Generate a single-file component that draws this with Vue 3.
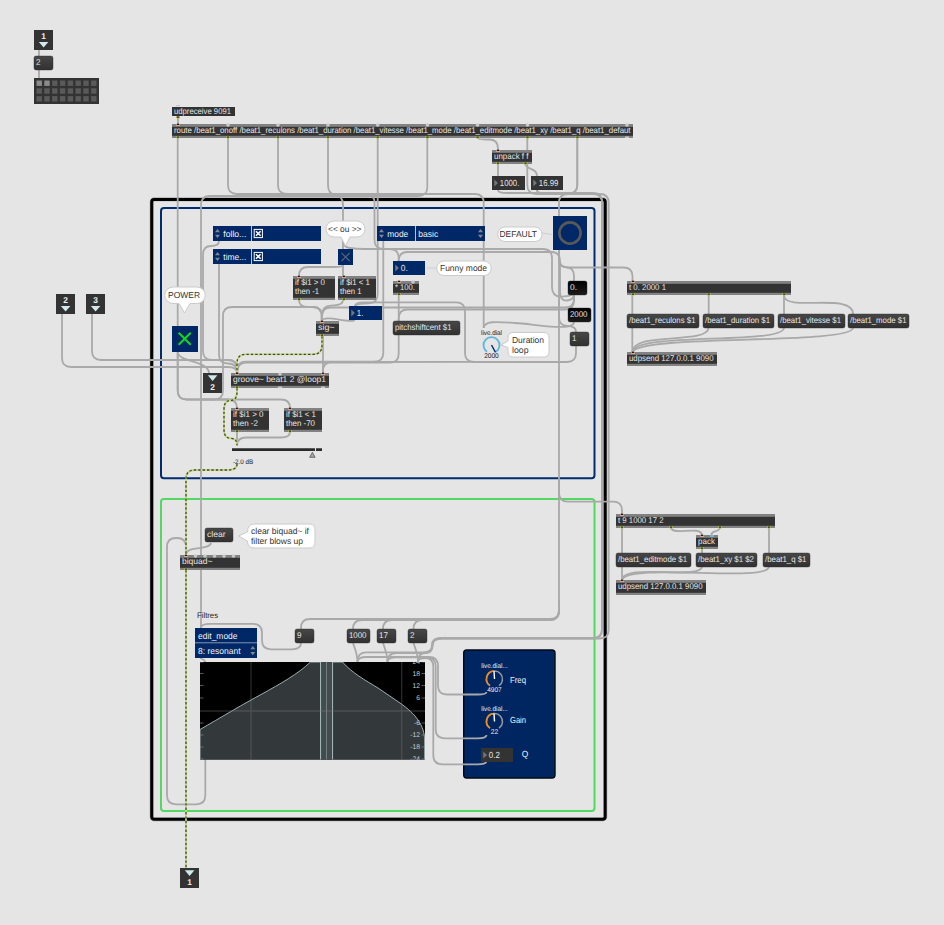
<script setup>
// Rounded polyline: pass points as "x,y x,y ..." and an optional corner radius.
function line(pts, r = 9) {
  const p = pts.split(' ').map((s) => s.split(',').map(Number))
  let d = `M${p[0][0]} ${p[0][1]}`
  for (let i = 1; i < p.length - 1; i++) {
    const [ax, ay] = p[i - 1], [bx, by] = p[i], [cx, cy] = p[i + 1]
    const l1 = Math.hypot(ax - bx, ay - by), l2 = Math.hypot(cx - bx, cy - by)
    const q1 = Math.min(r, i === 1 ? l1 : l1 / 2), q2 = Math.min(r, i === p.length - 2 ? l2 : l2 / 2)
    d += ` L${bx + ((ax - bx) * q1) / l1} ${by + ((ay - by) * q1) / l1} Q${bx} ${by} ${bx + ((cx - bx) * q2) / l2} ${by + ((cy - by) * q2) / l2}`
  }
  const e = p[p.length - 1]
  return d + ` L${e[0]} ${e[1]}`
}

const wires = [
  '39,50 39,56', '39,70 39,78', '178,117 178,124',
  '177.7,138 177.7,326',
  '177.7,352 177.7,399.5 223,399.5 223,307 321.5,307 321.5,321',
  '177.7,352 177.7,399.5 237,399.5 237,408',
  '200,399.5 290,399.5 290,408',
  '228,138 228,194 483.7,194 483.7,328',
  '278,138 278,194 374.5,194 374.5,249 398.7,249 398.7,261',
  '328,138 328,194 343,196 343,249',
  '377.7,138 377.7,303 355,304 355,307',
  '427.3,138 427.3,196 201,196 201,628',
  '343,240 343,247 356,249 552,249 552,296 568,297 574,294',
  '398.7,262 398.7,252 560,252 560,301 574,300 574,294',
  '577.3,138 577.3,194 559,194 559,216',
  '559,250 559,619 301,619 301,629',
  '559,600 559,620 353,620 353,629', '559,600 559,620 383,620 383,629', '559,600 559,620 413.5,620 413.5,629',
  '559,250 559,267.3 574,267.3 574,281', '559,250 559,267.5 632.5,267.5 632.5,281',
  '559,300 559,326 576,326 576,332',
  '574,294 574,307.5 322,307.5 322,321', '574,294 574,309.5 398.7,309.5 398.7,321',
  '576,346 576,362 465,362 465,302.3 355,302.3 355,306',
  '398.7,295 398.7,321',
  '398.7,335 398.7,362.7 237.5,362.7 237.5,373',
  '383.3,241 383.3,361.7 237,361.7 237,373',
  '520,361.8 323,362 323,373', '323,336 323,373',
  '299,300 299,307 322,307 322,321', '343,300 343,305 322,306 322,321',
  '343,265 343,276', '343,265 343,267 299,267 299,276',
  '219,241 219,246 203,246 203,360 237,360 237,373',
  '219,264 219,363.5 237,363.5 237,373',
  '62,314 62,367 237,367 237,373', '92,314 92,360 237,360 237,373',
  '237,432 237,446', '290,432 290,437.5 237,437.5 237,446',
  '205.3,759 205.3,804.3 167,804.3 167,538 186,538 186,555',
  '201,628 201,623.8 262,623.8 262,649.3 301,649.3 301,643',
  '353,643 357.5,656 357.5,662', '383,643 387.5,656 387.5,662', '413.5,643 418,656 418,662',
  '200,658 205,660 205,662',
  '357.5,662 357.5,652.3 432,652.3 432,638 602,638 602,193 498,193 498,190',
  '387.5,662 387.5,653 432.5,653 432.5,638.5 608.7,638.5 608.7,194 527.3,194 527.3,138',
  '577.3,138 577.3,193.6 537,193.6 537,190',
  '418,662 418,653 432.5,653 432.5,638.5 602,638.5 602,194 537,194 537,190',
  '357.5,662 357.5,657 438,657 438,694.5 486.5,694.5 486.5,692',
  '387.5,662 387.5,657.4 435.7,657.4 435.7,738.3 486.5,738.3 486.5,735',
  '418,662 418,658 433.3,658 433.3,764.3 486.5,764.3 486.5,761',
  '478,138 478,139.5 498,139.5 498,150', '498,164 498,176',
  '559,480 559,501.7 622,501.7 622,514',
  '632.3,295 632.3,352', '708.7,295 708.7,314', '784,295 784,314',
  '622,528 622,580', '769,528 769,553', '702,549 702,553',
].map((w) => line(w))

const curves = [
  'M177.7 352C179 363 208 360 209 373',
  'M354.5 320C353 324 322 314 322 321',
  'M525 164C527 170 537 168 537 176',
  'M483.7 328C484 320 500 322 515 323C535 324 574 332 574 322',
  'M784 296C786 312 853 292 853 314',
  'M708.5 328C707 345 633 331 632.5 352',
  'M784 328C782 345 634 332 632.5 352',
  'M853 328C851 345 640 334 632.5 352',
  'M671 528C673 536 701 525 702 535',
  'M720 528C718 533 711 530 711.5 535',
  'M702 567C700 580 623 563 622 580',
  'M769 567C766 583 628 562 622 580',
  'M211 543C209 551 186 545 186 555',
]

const signals = [
  '322,336 322,354.3 237,354.3 237,373',
  '237,388 237,400.5 224,400.5 224,438.3 237,438.3 237,445',
  '237,464 237,470 186,470 186,555',
  '186,570 186,868',
].map((w) => line(w))

// x, y, w, h, lines, line widths, inlets, outlets
const objects = [
  { x: 172, y: 107, w: 63, h: 9, t: ['udpreceive 9091'], l: [57], flat: true, o: [178] },
  { x: 172, y: 124, w: 461, h: 14, t: ['route /beat1_onoff /beat1_reculons /beat1_duration /beat1_vitesse /beat1_mode /beat1_editmode /beat1_xy /beat1_q /beat1_defaut'], l: [456.5], i: [178], c: [228, 278, 328, 377.7, 427.5, 477.5, 527.5, 627], o: [178, 228, 278, 328, 377.7, 427.5, 477.5, 527.5, 577.5] },
  { x: 492, y: 150, w: 40, h: 14, t: ['unpack f f'], l: [34.5], i: [498], o: [498, 525.5] },
  { x: 627, y: 281, w: 164, h: 14, t: ['t 0. 2000 1'], l: [37], i: [633], o: [633, 708.7, 784.3] },
  { x: 627, y: 352, w: 90, h: 14, t: ['udpsend 127.0.0.1 9090'], l: [84.5], i: [633] },
  { x: 616, y: 514, w: 159, h: 14, t: ['t 9 1000 17 2'], l: [45.5], i: [622], o: [622, 671, 720, 769] },
  { x: 696, y: 535, w: 22, h: 14, t: ['pack'], l: [17], i: [702], o: [702] },
  { x: 616, y: 580, w: 90, h: 15, t: ['udpsend 127.0.0.1 9090'], l: [84.5], i: [622] },
  { x: 180, y: 555, w: 60, h: 15, t: ['biquad~'], l: [30.5], i: [186], c: [195.5, 205, 214.5, 224, 233.5], o: [186] },
  { x: 231, y: 373, w: 98, h: 15, t: ['groove~ beat1 2 @loop1'], l: [93], i: [237, 323], c: [280], o: [237] },
  { x: 316, y: 321, w: 23, h: 15, t: ['sig~'], l: [16.5], i: [322], o: [322] },
  { x: 393, y: 281, w: 26, h: 14, t: ['* 100.'], l: [20], i: [399], c: [413], o: [399] },
  { x: 293, y: 276, w: 42, h: 24, t: ['if $i1 > 0', 'then -1'], l: [30, 24], i: [299], o: [299] },
  { x: 338, y: 276, w: 38, h: 24, t: ['if $i1 < 1', 'then 1'], l: [30, 21.5], i: [344], o: [344] },
  { x: 231, y: 408, w: 38, h: 24, t: ['if $i1 > 0', 'then -2'], l: [30.5, 25], i: [237], o: [237] },
  { x: 284, y: 408, w: 38, h: 24, t: ['if $i1 < 1', 'then -70'], l: [30, 29], i: [290], o: [290] },
]

const messages = [
  [34, 56, 19, '2', 4.5], [205, 528, 28, 'clear', 18.5], [295, 629, 19, '9', 4.5], [347, 629, 23, '1000', 17.5],
  [377, 629, 19, '17', 9], [408, 629, 19, '2', 4.5], [568, 281, 19, '0.', 7, true], [568, 308, 23, '2000', 17.5, true],
  [570, 332, 19, '1', 4.5], [393, 321, 67, 'pitchshiftcent $1', 56.5],
  [627, 314, 72, '/beat1_reculons $1', 66.5], [703, 314, 71, '/beat1_duration $1', 65], [778, 314, 67, '/beat1_vitesse $1', 61], [848, 314, 61, '/beat1_mode $1', 56.5],
  [616, 553, 75, '/beat1_editmode $1', 69], [696, 553, 61, '/beat1_xy $1 $2', 56], [763, 553, 47, '/beat1_q $1', 41.5],
]

const numbers = [
  [492, 176, 33, '1000.', 19.5], [531, 176, 32, '16.99', 19.5], [393, 261, 32, '0.', 7, true],
  [349, 306, 33, '1.', 6.5, true], [481, 748, 32, '0.2', 11],
]

const ports = [
  { x: 34, y: 30, n: 1, up: true }, { x: 56, y: 294, n: 2, up: true }, { x: 86, y: 294, n: 3, up: true },
  { x: 203, y: 373, n: 2 }, { x: 180, y: 868, n: 1 },
]

const attrs = [
  { x: 213, y: 226, label: 'follo...', l: 23, check: true },
  { x: 213, y: 249, label: 'time...', l: 23, check: true },
  { x: 377, y: 226, label: 'mode', l: 21, value: 'basic' },
]

const bubbles = [
  { d: 'M334 221H357A7.8 7.8 0 0 1 357 237H350L345.5 246L341 237H334A7.8 7.8 0 0 1 334 221Z', t: [['<< ou >>', 328, 231.8, 33.5]] },
  { d: 'M173 287H197A7 7 0 0 1 197 303.5H190L184.5 313L179 303.5H173A7 7 0 0 1 173 287Z', t: [['POWER', 168, 297.8, 32]] },
  { d: 'M505 227H535A7 7 0 0 1 542 234A7 7 0 0 1 535 241.5H505A7 7 0 0 1 505 227Z', tail: 'M542 233L552 234.5', t: [['DEFAULT', 499.5, 237, 37.5]] },
  { d: 'M444 261H484A7.2 7.2 0 0 1 484 275.5H444A7.2 7.2 0 0 1 444 261Z', tail: 'M437 268H427', t: [['Funny mode', 440, 271, 47]] },
  { d: 'M513 332.5H544Q549 332.5 549 338V352Q549 357 544 357H513Q508 357 508 352V347.5L501 345L508 341V338Q508 332.5 513 332.5Z', t: [['Duration', 512, 342.8, 32], ['loop', 512, 352.6, 16.5]] },
  { d: 'M254 524H310Q315 524 315 530V542Q315 548 310 548H254Q247.5 548 247.5 541L238.5 536L247.5 532Q247.5 524 254 524Z', t: [['clear biquad~ if', 251, 534, 58], ['filter blows up', 251, 543.5, 52]] },
]

const dials = [
  { x: 491.5, y: 345, name: 'live.dial', l: 21, v: '2000', vl: 14.5, blue: true },
  { x: 494.5, y: 679, name: 'live.dial...', l: 26.5, v: '4907', vl: 14.5 },
  { x: 494.5, y: 721.5, name: 'live.dial...', l: 26.5, v: '22', vl: 7.5 },
]

const scale = [
  ['24', 662], ['18', 673.5], ['12', 685.5], ['6', 698], ['-6', 723], ['-12', 735], ['-18', 747], ['-24', 759],
]
const cells = Array.from({ length: 24 }, (_, i) => ({ x: 36.5 + (i % 8) * 7.8, y: 80.5 + Math.floor(i / 8) * 7.8, on: i < 2 }))
</script>

<template>
  <svg class="patcher" width="944" height="925" viewBox="0 0 944 925">
    <defs>
      <linearGradient id="msg" x1="0" y1="0" x2="0" y2="1">
        <stop offset="0" stop-color="#474747" /><stop offset="1" stop-color="#313131" />
      </linearGradient>
      <linearGradient id="msgDark" x1="0" y1="0" x2="0" y2="1">
        <stop offset="0" stop-color="#000" /><stop offset="1" stop-color="#1c1c1c" />
      </linearGradient>
      <clipPath id="graphClip"><rect x="200" y="662" width="225" height="97.5" /></clipPath>
    </defs>

    <!-- panels -->
    <rect class="panel-halo" x="151.8" y="199.3" width="453.4" height="620" rx="2.5" />
    <rect class="panel black" x="151.7" y="199.5" width="453.5" height="619.7" rx="2.5" />
    <rect class="panel blue" x="161" y="208" width="433.5" height="270.3" rx="3" />
    <rect class="panel green" x="161" y="499" width="433.5" height="312" rx="3" />
    <rect class="dial-panel" x="463.7" y="650" width="91.3" height="128" rx="3" />

    <!-- patch cords -->
    <path v-for="(d, i) in wires" :key="'w' + i" class="wire" :d="d" />
    <path v-for="(d, i) in curves" :key="'c' + i" class="wire" :d="d" />
    <g v-for="(d, i) in signals" :key="'s' + i">
      <path class="signal" :d="d" /><path class="signal-dash" :d="d" />
    </g>

    <!-- matrix -->
    <rect class="body" x="34" y="78" width="65" height="26" />
    <rect v-for="(c, i) in cells" :key="'m' + i" :class="c.on ? 'cell on' : 'cell'" :x="c.x" :y="c.y" width="5.4" height="5.4" />

    <!-- inlets and outlets of the patch -->
    <g v-for="(p, i) in ports" :key="'p' + i">
      <rect class="body" :x="p.x" :y="p.y" width="19" height="20" />
      <path class="arrow" :d="`M${p.x + 4.8} ${p.y + (p.up ? 12 : 2.3)}h9.6l-4.8 5.6z`" />
      <text class="port" :x="p.x + 9.7" :y="p.y + (p.up ? 9 : 17)">{{ p.n }}</text>
    </g>

    <!-- object boxes -->
    <g v-for="(o, i) in objects" :key="'o' + i">
      <rect v-if="!o.flat" class="strip" :x="o.x" :y="o.y" :width="o.w" :height="o.h" />
      <rect class="body" :x="o.x" :y="o.flat ? o.y : o.y + 2.8" :width="o.w" :height="o.flat ? o.h : o.h - 5" />
      <circle v-for="c in o.c || []" :key="'t' + c" class="cold" :cx="c" :cy="o.y + 1" r="1.8" />
      <g v-for="c in o.i || []" :key="'i' + c">
        <rect class="hot" :x="c - 2" :y="o.y" width="4" height="2" /><rect class="dot" :x="c - 1.2" :y="o.y - 0.3" width="2.4" height="1.3" />
      </g>
      <g v-for="c in o.o || []" :key="'u' + c">
        <rect class="out" :x="c - 2" :y="o.y + o.h - (o.flat ? 0 : 2)" width="4" height="2.4" rx="1" /><rect class="dot" :x="c - 1.2" :y="o.y + o.h - (o.flat ? -0.5 : 1.5)" width="2.4" height="1.2" />
      </g>
      <text v-for="(s, k) in o.t" :key="s" class="obj" :x="o.x + 2" :y="o.y + (o.flat ? 6.6 : 9.2) + k * 9" :textLength="o.l[k]" lengthAdjust="spacingAndGlyphs">{{ s }}</text>
    </g>
    <path class="cold" d="M176 105h4v1.2h-4zM278 386.5h4v1.5h-4zM321 386.5h4v1.5h-4zM625 136.5h4v1.5h-4z" />
    <rect class="blue-inlet" x="710" y="535" width="4" height="2" />

    <!-- messages -->
    <g v-for="(m, i) in messages" :key="'g' + i">
      <rect :class="m[5] ? 'message dark' : 'message'" :x="m[0]" :y="m[1]" :width="m[2]" height="14" rx="2" />
      <text class="obj" :x="m[0] + 2" :y="m[1] + 9" :textLength="m[4]" lengthAdjust="spacingAndGlyphs">{{ m[3] }}</text>
    </g>

    <!-- number boxes -->
    <g v-for="(n, i) in numbers" :key="'n' + i">
      <rect :class="n[5] ? 'navy' : 'body'" :x="n[0]" :y="n[1]" :width="n[2]" height="14" />
      <path class="handle" :d="`M${n[0] + 2.3} ${n[1] + 3.6}v7l3.6-3.5z`" />
      <text class="obj num" :x="n[0] + 7.8" :y="n[1] + 9.9" :textLength="n[4]" lengthAdjust="spacingAndGlyphs">{{ n[3] }}</text>
    </g>

    <!-- attribute boxes -->
    <g v-for="(a, i) in attrs" :key="'a' + i">
      <rect class="navy" :x="a.x" :y="a.y" width="108" height="15" />
      <rect class="split" :x="a.x + 38" :y="a.y" width="1" height="15" />
      <path class="updown" :d="`M${a.x + 2} ${a.y + 6.3}l2.5-3.3 2.5 3.3zM${a.x + 2} ${a.y + 8.8}h5l-2.5 3.3z`" />
      <text class="attr" :x="a.x + 10.3" :y="a.y + 10.6" :textLength="a.l" lengthAdjust="spacingAndGlyphs">{{ a.label }}</text>
      <g v-if="a.check">
        <rect class="check" :x="a.x + 41.2" :y="a.y + 3.4" width="8.2" height="8.2" />
        <path class="check-x" :d="`M${a.x + 43} ${a.y + 5.2}l4.6 4.6m0-4.6l-4.6 4.6`" />
      </g>
      <template v-else>
        <text class="attr" :x="a.x + 41.3" :y="a.y + 10.6" textLength="20" lengthAdjust="spacingAndGlyphs">{{ a.value }}</text>
        <path class="updown" :d="`M${a.x + 101} ${a.y + 6.3}l2.5-3.3 2.5 3.3zM${a.x + 101} ${a.y + 8.8}h5l-2.5 3.3z`" />
      </template>
    </g>
    <rect class="navy" x="195" y="628" width="62" height="30" />
    <rect class="split soft" x="195" y="642.3" width="62" height="1" />
    <text class="attr" x="198" y="638.8" textLength="39.5" lengthAdjust="spacingAndGlyphs">edit_mode</text>
    <text class="attr" x="198" y="653.6" textLength="42.5" lengthAdjust="spacingAndGlyphs">8: resonant</text>
    <path class="updown" d="M250.3 649.3l2.5-3.3 2.5 3.3zM250.3 652h5l-2.5 3.3z" />

    <!-- toggles and bang -->
    <rect class="navy" x="338" y="249" width="15" height="16" />
    <path class="x-off" d="M341.6 253l8 8m0-8l-8 8" />
    <rect class="navy" x="172" y="326" width="26" height="26" />
    <path class="x-on" d="M178.7 332.7l12 12m0-12l-12 12" />
    <rect class="navy" x="553" y="216" width="34" height="34" />
    <circle class="bang" cx="570" cy="233" r="10.6" />

    <!-- gain slider -->
    <path class="slider" d="M232 448.2H315V451H232zM316 448.2H322V451H316z" />
    <path class="thumb" d="M312.4 452.3l2.7 5h-5.4z" />
    <text class="tiny" x="233" y="463.8" textLength="20.3" lengthAdjust="spacingAndGlyphs">-2.0 dB</text>

    <!-- comments -->
    <g v-for="(b, i) in bubbles" :key="'b' + i">
      <path v-if="b.tail" class="tail" :d="b.tail" />
      <path class="bubble" :d="b.d" />
      <text v-for="s in b.t" :key="s[0]" class="comment" :x="s[1]" :y="s[2]" :textLength="s[3]" lengthAdjust="spacingAndGlyphs">{{ s[0] }}</text>
    </g>
    <text class="filtres" x="197" y="618" textLength="21" lengthAdjust="spacingAndGlyphs">Filtres</text>

    <!-- dials -->
    <g v-for="(d, i) in dials" :key="'d' + i" :class="d.blue ? 'dial plain' : 'dial'">
      <text class="dial-text" :x="d.x" :y="d.y - (d.blue ? 10.3 : 11)" :textLength="d.l" lengthAdjust="spacingAndGlyphs">{{ d.name }}</text>
      <path class="arc" :d="`M${d.x - 4.5} ${d.y + 6.7}a8 8 0 1 1 9 0`" />
      <path v-if="!d.blue" class="arc lit" :d="`M${d.x - 4.5} ${d.y + 6.7}a8 8 0 0 1 3.8 -14.7`" />
      <path class="needle" :d="d.blue ? `M${d.x} ${d.y}l4 7.4` : `M${d.x} ${d.y}l-.5 -8`" />
      <text class="dial-text" :x="d.x" :y="d.y + 12.5" :textLength="d.vl" lengthAdjust="spacingAndGlyphs">{{ d.v }}</text>
    </g>
    <text class="attr" x="510" y="683.2" textLength="16" lengthAdjust="spacingAndGlyphs">Freq</text>
    <text class="attr" x="510" y="723.2" textLength="16" lengthAdjust="spacingAndGlyphs">Gain</text>
    <text class="attr" x="521.7" y="757.2" textLength="6.5" lengthAdjust="spacingAndGlyphs">Q</text>

    <!-- filter graph -->
    <g clip-path="url(#graphClip)">
      <rect x="200" y="662" width="225" height="98" fill="#000" />
      <path class="response" d="M200 729.5C220 718 245 703 262 694C280 684 298 674 310.5 662H342.5C352 673 365 680 378 688L400 703C416 714 424.6 726 424.6 740V761H200Z" />
      <rect class="band" x="320.6" y="661" width="12" height="100" />
      <path class="band-mid" d="M326.5 662V760" />
      <path class="grid" d="M251 662V760M401.7 662V760M200 711H425" />
      <g v-for="s in scale" :key="s[0]">
        <path class="tick" :d="`M200 ${s[1]}h3.5M421.5 ${s[1]}h3.5`" />
        <text class="scale-text" x="420" :y="s[1] + 2.3">{{ s[0] }}</text>
      </g>
    </g>
  </svg>
</template>

<style>
body { background: #e5e5e5; }
</style>

<style scoped>
.patcher { display: block; background: #e5e5e5; font-family: "Liberation Sans", Arial, sans-serif; text-rendering: geometricPrecision; }
.panel { fill: none; }
.panel-halo { fill: none; stroke: #bdbdbd; stroke-width: 4.4; }
.panel.black { stroke: #000; stroke-width: 3; }
.panel.blue { stroke: #002d72; stroke-width: 2; }
.panel.green { stroke: #51d961; stroke-width: 2; }
.dial-panel { fill: #002661; stroke: #000916; stroke-width: 1.4; }
.wire { fill: none; stroke: #a9a9a9; stroke-width: 1.8; }
.signal { fill: none; stroke: #c3d983; stroke-width: 1.8; }
.signal-dash { fill: none; stroke: #434a27; stroke-width: 1.3; stroke-dasharray: 2.4 2; }
.body { fill: #333; }
.strip { fill: #828282; }
.cold { fill: #c9c9c9; }
.hot { fill: #dfa08c; }
.out { fill: #b9c952; }
.dot { fill: #1d1d18; }
.blue-inlet { fill: #78b4cb; }
.cell { fill: #5a5a5a; }
.cell.on { fill: #8b8b8b; }
.arrow { fill: #cfe9ee; }
.port { fill: #f0f0f0; font-size: 8.4px; font-weight: 700; text-anchor: middle; }
.obj { fill: #e6e6e6; font-size: 8.3px; white-space: pre; }
.num { font-size: 8.8px; }
.message { fill: url(#msg); stroke: #2a2a2a; stroke-width: .4; }
.message.dark { fill: url(#msgDark); }
.navy { fill: #002866; }
.handle { fill: #777; }
.split { fill: #b9c4d6; }
.split.soft { fill: #8394b4; }
.updown { fill: #83868c; }
.attr { fill: #f0f3f8; font-size: 8.8px; }
.check { fill: none; stroke: #fff; stroke-width: 1; }
.check-x { stroke: #fff; stroke-width: 1.6; }
.x-off { fill: none; stroke: #596579; stroke-width: 1.1; }
.x-on { fill: none; stroke: #10d91c; stroke-width: 2; }
.bang { fill: none; stroke: #595959; stroke-width: 2.6; }
.slider { fill: #2b2b2b; }
.thumb { fill: #a7a7a7; stroke: #555; stroke-width: .8; }
.tiny { fill: #222; font-size: 6.6px; }
.bubble { fill: #fff; stroke: #cbcbcb; stroke-width: 1; }
.tail { stroke: #cfcfcf; stroke-width: 1; }
.comment { fill: #333; font-size: 8.7px; }
.filtres { fill: #222; font-size: 8px; }
.dial-text { fill: #e9edf4; font-size: 6.8px; text-anchor: middle; }
.arc { fill: none; stroke: #98989c; stroke-width: 1.5; }
.arc.lit { stroke: #f18a1d; }
.needle { stroke: #fff; stroke-width: 1.4; }
.plain .dial-text { fill: #222; }
.plain .arc { stroke: #5cb7dc; stroke-width: 1.8; }
.plain .needle { stroke: #002866; }
.response { fill: #33383b; stroke: #a9bfc0; stroke-width: .9; }
.band { fill: #444b4e; stroke: #b2c8c9; stroke-width: .9; }
.band-mid { stroke: #7f8e90; stroke-width: .8; }
.grid { stroke: #808080; stroke-opacity: .33; stroke-width: 1.3; fill: none; }
.tick { stroke: #8d9798; stroke-width: .6; }
.scale-text { fill: #c9cdce; font-size: 6.8px; text-anchor: end; }
</style>
